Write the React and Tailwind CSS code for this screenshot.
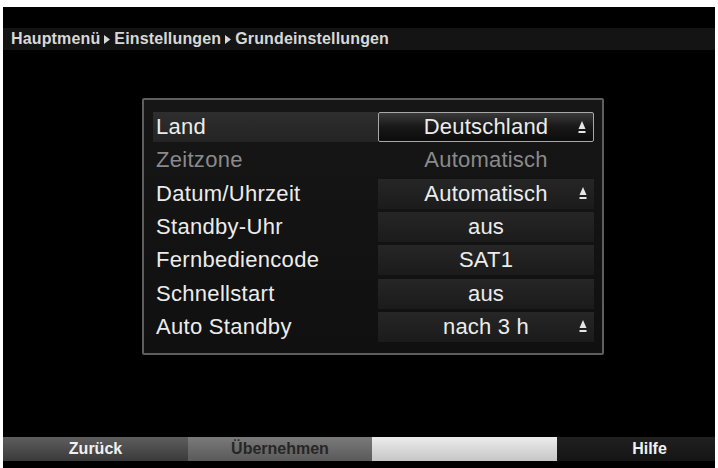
const rows = [
  { label: "Land", value: "Deutschland", arrow: true, selected: true },
  { label: "Zeitzone", value: "Automatisch", disabled: true },
  { label: "Datum/Uhrzeit", value: "Automatisch", arrow: true },
  { label: "Standby-Uhr", value: "aus" },
  { label: "Fernbediencode", value: "SAT1" },
  { label: "Schnellstart", value: "aus" },
  { label: "Auto Standby", value: "nach 3 h", arrow: true },
];

function Crumb() {
  return (
    <svg width="6" height="9" viewBox="0 0 6 9" className="mx-[4px]">
      <path d="M0 0 L6 4.5 L0 9 Z" fill="#d8d8d8" />
    </svg>
  );
}

function ListArrow() {
  return (
    <svg width="8" height="13" viewBox="0 0 8 13" className="absolute right-[7px] top-[8px]">
      <path d="M4 0 L7.5 8 L0.5 8 Z" fill="#e6e6e6" />
      <rect x="0.5" y="10" width="7" height="2" fill="#e6e6e6" />
    </svg>
  );
}

function Row({ row }) {
  const labelColor = row.disabled ? "text-[#8a8a8a]" : "text-[#ececec]";
  let box = "bg-gradient-to-b from-[#262626] to-[#1b1b1b]";
  if (row.selected) box = "border border-[#a8a8a8] rounded-[2px] bg-gradient-to-b from-[#3a3a3a] via-[#181818] to-[#0c0c0c]";
  if (row.disabled) box = "";

  return (
    <div className="flex h-[30px]">
      <div
        className={`flex-1 flex items-center pl-[3px] tracking-[0.3px] ${labelColor} ${
          row.selected ? "bg-gradient-to-b from-[#2e2e2e] to-[#242424]" : ""
        }`}
      >
        {row.label}
      </div>
      <div className={`relative w-[216px] flex items-center justify-center tracking-[0.2px] ${box} ${labelColor}`}>
        {row.value}
        {row.arrow && <ListArrow />}
      </div>
    </div>
  );
}

export default function App() {
  return (
    <div className="w-[718px] h-[468px] bg-white pt-[7px] px-[3px] overflow-hidden" style={{ fontFamily: '"Liberation Sans", Arial, sans-serif' }}>
      <div className="h-[461px] bg-black flex flex-col">
        {/* Titelzeile */}
        <div className="mt-[21px] h-[22px] bg-[#141414] flex items-center pl-[8px] text-[16px] tracking-[0.15px] font-bold text-[#d8d8d8] leading-none">
          <span>Hauptmenü</span>
          <Crumb />
          <span>Einstellungen</span>
          <Crumb />
          <span>Grundeinstellungen</span>
        </div>

        {/* Menü */}
        <div className="mt-[48px] ml-[139px] w-[462px] h-[257px] border-2 border-[#5e5e5e] rounded-[2px] bg-gradient-to-b from-[#161616] to-[#101010] pt-[12px] pl-[9px] pr-[8px]">
          <div className="flex flex-col gap-[3.33px] text-[22px] leading-none">
            {rows.map((r) => (
              <Row key={r.label} row={r} />
            ))}
          </div>
        </div>

        {/* Farbtasten */}
        <div className="mt-auto mb-[7px] h-[24px] flex overflow-hidden text-[16px] font-bold leading-none">
          <div className="w-[185px] shrink-0 flex items-center justify-center bg-gradient-to-b from-[#5e5e5e] to-[#3a3a3a] text-[#f0f0f0]">
            Zurück
          </div>
          <div className="w-[184px] shrink-0 flex items-center justify-center bg-gradient-to-b from-[#7a7a7a] to-[#5a5a5a] text-[#262626]">
            Übernehmen
          </div>
          <div className="w-[185px] shrink-0 bg-gradient-to-b from-[#ececec] to-[#c6c6c6]" />
          <div className="w-[185px] shrink-0 flex items-center justify-center bg-gradient-to-b from-[#202020] to-[#141414] text-[#f0f0f0]">
            Hilfe
          </div>
        </div>
      </div>
    </div>
  );
}
